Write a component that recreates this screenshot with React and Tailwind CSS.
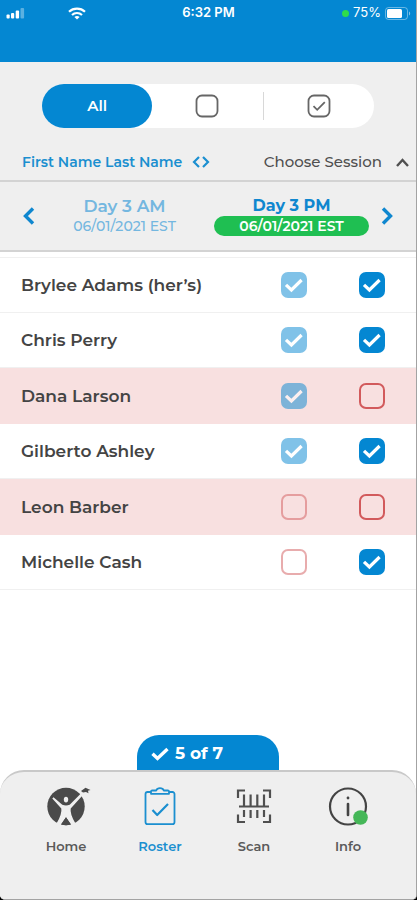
import { useState } from "react";

const attendees = [
  { name: "Brylee Adams (her’s)", am: true, pm: true },
  { name: "Chris Perry", am: true, pm: true },
  { name: "Dana Larson", am: true, pm: false },
  { name: "Gilberto Ashley", am: true, pm: true },
  { name: "Leon Barber", am: false, pm: false },
  { name: "Michelle Cash", am: false, pm: true },
];

function StatusBar() {
  return (
    <div className="grid h-[26px] grid-cols-3 items-center pr-[5px] pl-[6px] font-['Inter','Roboto',sans-serif] text-[13px] font-semibold text-white">
      <div className="flex items-center gap-[43px]">
        <svg width="19" height="12" viewBox="0 0 19 12" fill="currentColor" aria-hidden="true">
          <rect x="0.5" y="7.5" width="3.2" height="4" rx="1" />
          <rect x="5" y="6" width="3.2" height="5.5" rx="1" />
          <rect x="9.7" y="3.5" width="3.4" height="8" rx="1" />
          <rect x="14.5" y="1" width="3.6" height="10.5" rx="1" opacity="0.35" />
        </svg>
        <svg width="18" height="13" viewBox="0 0 18 13" fill="none" stroke="currentColor" strokeWidth="2.2" aria-hidden="true">
          <path d="M1 4.8C5.4 0.6 12.6 0.6 17 4.8" />
          <path d="M4 8C6.8 5.3 11.2 5.3 14 8" />
          <path d="M9 12.6L6.4 10C7.8 8.7 10.2 8.7 11.6 10Z" fill="currentColor" stroke="none" />
        </svg>
      </div>
      <span className="text-center">6:32 PM</span>
      <div className="flex items-center justify-end gap-1">
        <span className="size-[7px] rounded-full bg-[#2fdc4c]" />
        <span className="font-normal">75%</span>
        <svg width="26" height="13" viewBox="0 0 26 13" aria-hidden="true">
          <rect x="0.5" y="0.5" width="22" height="12" rx="3" fill="none" stroke="#fff" opacity="0.4" />
          <rect x="2" y="2" width="15" height="9" rx="1.5" fill="#fff" />
          <path d="M24 4.5C25.6 5 25.6 8 24 8.5Z" fill="#fff" opacity="0.5" />
        </svg>
      </div>
    </div>
  );
}

function Chevron({ d, width, height, stroke }) {
  return (
    <svg width={width} height={height} viewBox={`0 0 ${width} ${height}`} fill="none" stroke="currentColor" strokeWidth={stroke} aria-hidden="true">
      <path d={d} />
    </svg>
  );
}

function FilterBar({ filter, setFilter }) {
  const option = (key) =>
    filter === key ? "bg-[#0487d2] text-white" : "text-[#666]";
  return (
    <div className="px-[42px] pt-[22px]">
      <div className="flex h-11 items-stretch rounded-full bg-white">
        <button type="button" onClick={() => setFilter("all")} className={`flex-1 rounded-full text-[15px] font-semibold ${option("all")}`}>
          All
        </button>
        <button type="button" aria-label="Not checked in" onClick={() => setFilter("out")} className={`flex flex-1 items-center justify-center rounded-full ${option("out")}`}>
          <svg width="24" height="24" viewBox="0 0 24 24" fill="none" stroke="currentColor" strokeWidth="1.8" aria-hidden="true">
            <rect x="1.5" y="1.5" width="21" height="21" rx="5.5" />
          </svg>
        </button>
        <span className="my-2 w-px bg-[#d8d8d8]" />
        <button type="button" aria-label="Checked in" onClick={() => setFilter("in")} className={`flex flex-1 items-center justify-center rounded-full ${option("in")}`}>
          <svg width="24" height="24" viewBox="0 0 24 24" fill="none" stroke="currentColor" strokeWidth="1.8" aria-hidden="true">
            <rect x="1.5" y="1.5" width="21" height="21" rx="5.5" />
            <path d="M6.5 12.2L10.2 15.8L17.8 8.2" />
          </svg>
        </button>
      </div>
    </div>
  );
}

function AttendanceBox({ label, checked, onChange, faded }) {
  return (
    <span className={`grid place-items-center ${faded ? "opacity-50" : ""}`}>
      <input
        type="checkbox"
        aria-label={label}
        checked={checked}
        onChange={onChange}
        className="col-start-1 row-start-1 size-[26px] appearance-none rounded-[7px] border-2 border-[#d25a5c] checked:border-[#0487d2] checked:bg-[#0487d2]"
      />
      {checked && (
        <svg width="26" height="26" viewBox="0 0 26 26" fill="none" stroke="#fff" strokeWidth="3.2" className="pointer-events-none col-start-1 row-start-1" aria-hidden="true">
          <path d="M5 12.8L10.4 18L20.6 8" />
        </svg>
      )}
    </span>
  );
}

function HomeIcon() {
  return (
    <svg width="50" height="40" viewBox="-5.5 0 50 40" aria-hidden="true">
      <circle cx="19.5" cy="20.5" r="18.7" fill="#4a4a4a" />
      <ellipse cx="19.5" cy="13.6" rx="2.2" ry="2.9" fill="#efefef" />
      <path d="M7 11.2L15.8 18.8Q19.5 20.4 23.2 18.8L34.4 7.6L36.2 9.2L24.2 22.4Q23.2 27.5 29 37.6L25.2 39.4L19.5 31.2L13.8 39.4L10 37.6Q15.8 27.5 14.8 22.4L5.8 12.6Z" fill="#efefef" />
      <path d="M19.5 31.2L14.6 38.6C18 39.4 21 39.4 24.4 38.6Z" fill="#4a4a4a" />
      <path d="M34.5 5L39 1.8L44 4L41.5 4.8L42 7.2L39.5 6L36.5 6.4Z" fill="#4a4a4a" />
    </svg>
  );
}

function RosterIcon() {
  return (
    <svg width="32" height="40" viewBox="0 0 32 40" fill="none" stroke="currentColor" strokeWidth="1.8" strokeLinejoin="round" aria-hidden="true">
      <path d="M7 6H3.6C2.4 6 1.5 6.9 1.5 8.1V36C1.5 37.2 2.4 38.2 3.6 38.2H28.4C29.6 38.2 30.5 37.2 30.5 36V8.1C30.5 6.9 29.6 6 28.4 6H25" />
      <path d="M7 7.8V5.6C7 4.9 7.5 4.5 8.2 4.5H12.2C12.8 3 14.2 2.2 16 2.2S19.2 3 19.8 4.5H23.8C24.5 4.5 25 4.9 25 5.6V7.8Z" />
      <path d="M8.5 24L13.2 29L24 18" strokeWidth="2.2" />
    </svg>
  );
}

function ScanIcon() {
  return (
    <svg width="36" height="40" viewBox="0 0 36 40" fill="none" stroke="#4f4f4f" strokeWidth="2.2" aria-hidden="true">
      <path d="M2 12V4.5H9M27 4.5H34V12M34 28.5V36H27M9 36H2V28.5" />
      <path d="M3 20.5H33" />
      <path d="M8 8.5V20M14.6 8.5V20M21.3 8.5V20M28 8.5V20" />
      <path d="M8 24V31M14.6 24V32M21.3 24V32M28 24V31" />
    </svg>
  );
}

function InfoIcon() {
  return (
    <svg width="40" height="40" viewBox="0 0 40 40" fill="none" aria-hidden="true">
      <circle cx="20" cy="20.5" r="18" stroke="#444" strokeWidth="2.2" />
      <circle cx="20" cy="12" r="1.4" fill="#444" />
      <path d="M20 18V29" stroke="#444" strokeWidth="2.6" strokeLinecap="round" />
      <circle cx="32.5" cy="31.5" r="7.3" fill="#45b758" />
    </svg>
  );
}

const tabs = [
  { label: "Home", Icon: HomeIcon },
  { label: "Roster", Icon: RosterIcon, active: true },
  { label: "Scan", Icon: ScanIcon },
  { label: "Info", Icon: InfoIcon },
];

export default function App() {
  const [rows, setRows] = useState(attendees);
  const [filter, setFilter] = useState("all");

  const toggle = (name, key) =>
    setRows(rows.map((r) => (r.name === name ? { ...r, [key]: !r[key] } : r)));
  const visible = rows.filter(
    (r) => filter === "all" || (filter === "in" ? r.pm : !r.pm)
  );

  return (
    <div className="min-h-screen bg-black font-['Montserrat','Inter',sans-serif] text-[#444]">
      <div className="flex min-h-screen flex-col overflow-hidden rounded-b-[5px] border-r border-b border-[#a3a3a3] bg-white">
        <header className="h-[62px] bg-[#0487d2]">
          <StatusBar />
        </header>

        <section className="border-b-2 border-[#d3d3d3] bg-[#efefef]">
          <FilterBar filter={filter} setFilter={setFilter} />
          <div className="flex h-[52px] items-center justify-between pt-4 pr-[7px] pl-[22px]">
            <button type="button" className="flex items-center gap-[10px] text-sm font-semibold text-[#1b8fd0]">
              First Name Last Name
              <Chevron width={18} height={12} stroke={2.2} d="M7 1L2 6L7 11M11 1L16 6L11 11" />
            </button>
            <button type="button" className="flex items-center gap-[14px] text-[15px] font-medium text-[#505050]">
              Choose Session
              <Chevron width={13} height={9} stroke={2.4} d="M1 8L6.5 2L12 8" />
            </button>
          </div>
        </section>

        <section className="flex h-[70px] items-center justify-between border-b-2 border-[#d3d3d3] bg-[#efefef] px-[22px] text-[#0f87cf]">
          <button type="button" aria-label="Previous session">
            <Chevron width={13} height={18} stroke={3.4} d="M11 1.5L3.5 9L11 16.5" />
          </button>
          <div className="flex flex-1 justify-between px-3">
            <button type="button" className="flex w-[155px] flex-col items-center text-[#74b7e0]">
              <span className="text-[17px] leading-5 font-semibold">Day 3 AM</span>
              <span className="text-sm leading-5 font-medium">06/01/2021 EST</span>
            </button>
            <button type="button" className="flex w-[155px] flex-col items-center">
              <span className="text-base leading-5 font-bold">Day 3 PM</span>
              <span className="w-full rounded-full bg-[#1fbf52] text-sm leading-5 font-semibold text-white">06/01/2021 EST</span>
            </button>
          </div>
          <button type="button" aria-label="Next session">
            <Chevron width={13} height={18} stroke={3.4} d="M2 1.5L9.5 9L2 16.5" />
          </button>
        </section>

        <main className="flex-1 pt-[5px]">
          <table className="w-full border-collapse border-t border-[#f0f0f0]">
            <tbody>
              {visible.map((r) => {
                const absent = !r.pm;
                return (
                  <tr key={r.name} className={absent ? "h-14 bg-[#f8e0e0]" : "h-[55px] border-b border-[#f0f0f0]"}>
                    <th scope="row" className="pl-[21px] text-left text-[17px] leading-6 font-semibold">
                      {r.name}
                    </th>
                    <td className="w-[78px]">
                      <AttendanceBox faded label={`${r.name}, Day 3 AM`} checked={r.am} onChange={() => toggle(r.name, "am")} />
                    </td>
                    <td className="w-[83px] pr-[5px]">
                      <AttendanceBox label={`${r.name}, Day 3 PM`} checked={r.pm} onChange={() => toggle(r.name, "pm")} />
                    </td>
                  </tr>
                );
              })}
            </tbody>
          </table>
        </main>

        <div className="mx-auto flex h-[35px] w-[142px] items-center gap-[6px] rounded-t-[22px] bg-[#0487d2] pt-[2px] pl-[14px] text-[17px] font-bold text-white">
          <svg width="18" height="14" viewBox="0 0 18 14" fill="none" stroke="currentColor" strokeWidth="3.4" aria-hidden="true">
            <path d="M1.5 6.8L6.5 11.5L16.5 2" />
          </svg>
          5 of 7
        </div>
        <nav className="flex h-[129px] items-start rounded-t-[24px] border-t-2 border-[#c9c9c9] bg-[#efefef] pt-[14px] pr-[21px] pl-[19px]">
          {tabs.map(({ label, Icon, active }) => (
            <a key={label} href={`#${label.toLowerCase()}`} className={`flex flex-1 flex-col items-center gap-[10px] text-[13px] leading-5 font-semibold ${active ? "text-[#1b8fd0]" : "text-[#5a5a5a]"}`}>
              <Icon />
              {label}
            </a>
          ))}
        </nav>
      </div>
    </div>
  );
}
